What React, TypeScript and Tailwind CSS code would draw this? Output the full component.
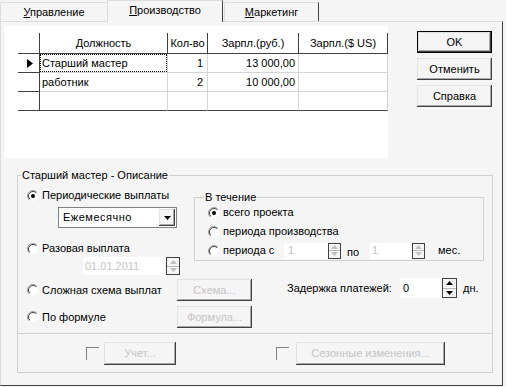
import React from 'react';

const BEVEL = 'shadow-[inset_-1px_-1px_#404040,inset_1px_1px_#e2e2e2,inset_-2px_-2px_#a8a8a8]';

const Radio = ({ checked = false }: { checked?: boolean }) => (
  <svg width="12" height="12" viewBox="0 0 12 12" className="shrink-0">
    <circle cx="6" cy="6" r="5" fill="#ffffff" />
    <path d="M9.9 2.1 A5.5 5.5 0 0 0 2.1 9.9" fill="none" stroke="#a0a0a0" strokeWidth="1" />
    <path d="M9.2 2.8 A4.5 4.5 0 0 0 2.8 9.2" fill="none" stroke="#404040" strokeWidth="1" />
    {checked && <circle cx="6" cy="6" r="2" fill="#000000" />}
  </svg>
);

const RadioRow = ({ label, checked, className = '' }: { label: string; checked?: boolean; className?: string }) => (
  <div className={`flex items-center gap-[3px] h-[13px] ${className}`}>
    <Radio checked={checked} />
    <span className="whitespace-nowrap">{label}</span>
  </div>
);

const Checkbox = ({ className = '' }: { className?: string }) => (
  <div className={`w-[13px] h-[13px] shrink-0 border-t border-l border-[#808080] bg-[#f5f5f5] ${className}`} />
);

const Arrow = ({ up, color }: { up?: boolean; color: string }) => (
  <svg width="7" height="4" viewBox="0 0 7 4">
    <path d={up ? 'M3.5 0 L7 4 L0 4 Z' : 'M0 0 L7 0 L3.5 4 Z'} fill={color} />
  </svg>
);

const Spin = ({ className = '', disabled = false }: { className?: string; disabled?: boolean }) => {
  const c = disabled ? '#c0c0c0' : '#000000';
  return (
    <div className={`flex flex-col shrink-0 border border-[#404040] bg-[#f5f5f5] ${className}`}>
      <div className="flex-1 flex items-center justify-center border-b border-[#b8b8b8]">
        <Arrow up color={c} />
      </div>
      <div className="flex-1 flex items-center justify-center">
        <Arrow color={c} />
      </div>
    </div>
  );
};

const Button = ({
  children,
  className = '',
  disabled = false,
  isDefault = false,
}: {
  children: React.ReactNode;
  className?: string;
  disabled?: boolean;
  isDefault?: boolean;
}) => (
  <div
    className={`flex items-center justify-center shrink-0 bg-[#f5f5f5] ${BEVEL} ${
      isDefault ? 'border border-black' : ''
    } ${disabled ? 'text-[#c4c4c4]' : 'text-black'} ${className}`}
  >
    {children}
  </div>
);

const Tab = ({ first, rest, selected, className = '' }: { first: string; rest: string; selected?: boolean; className?: string }) => (
  <div
    className={`flex items-center justify-center shrink-0 bg-[#f5f5f5] border-t border-l border-[#dcdcdc] rounded-tl-[2px] ${
      selected ? 'h-[22px] -mb-px relative z-10 pb-[2px]' : 'h-[19px]'
    } ${className}`}
  >
    <span>
      <span className="underline underline-offset-[1px]">{first}</span>
      {rest}
    </span>
  </div>
);

const rows = [
  { name: 'Старший мастер', qty: '1', rub: '13 000,00', focus: true, current: true },
  { name: 'работник', qty: '2', rub: '10 000,00' },
  { name: '', qty: '', rub: '' },
];

const Grid = () => (
  <div className="w-[370px]">
    <div className="flex h-[21px] border-b border-[#404040]">
      <div className="w-[22px] border-r border-[#404040]" />
      <div className="w-[128px] border-r border-[#404040] flex items-center justify-center">Должность</div>
      <div className="w-[40px] border-r border-[#404040] flex items-center justify-center">Кол-во</div>
      <div className="w-[91px] border-r border-[#404040] flex items-center justify-center">Зарпл.(руб.)</div>
      <div className="w-[89px] border-r border-[#404040] flex items-center justify-center">Зарпл.($ US)</div>
    </div>
    {rows.map((r, i) => {
      const last = i === rows.length - 1;
      const bb = last ? 'border-b-[#404040]' : 'border-b-[#d4d4d4]';
      return (
        <div key={i} className="flex h-[19px]">
          <div className="w-[22px] border-r border-b border-[#404040] flex items-center justify-center pl-[3px]">
            {r.current && (
              <svg width="6" height="9" viewBox="0 0 6 9">
                <path d="M0 0 L6 4.5 L0 9 Z" fill="#000" />
              </svg>
            )}
          </div>
          <div className={`w-[128px] border-r border-b border-r-[#d4d4d4] ${bb} flex`}>
            <div className={`flex-1 flex items-center pl-[1px] ${r.focus ? 'border border-dotted border-black' : 'border border-transparent'}`}>
              {r.name}
            </div>
          </div>
          <div className={`w-[40px] border-r border-b border-r-[#d4d4d4] ${bb} flex items-center justify-end pr-[4px]`}>{r.qty}</div>
          <div className={`w-[91px] border-r border-b border-r-[#d4d4d4] ${bb} flex items-center justify-end pr-[3px]`}>{r.rub}</div>
          <div className={`w-[89px] border-r border-b border-r-[#d4d4d4] ${bb}`} />
        </div>
      );
    })}
  </div>
);

export default function App() {
  return (
    <div className="w-[506px] h-[387px] bg-[#f5f5f5] font-['Liberation_Sans',Arial,sans-serif] text-[11px] leading-[13px] text-black overflow-hidden select-none">
      {/* tabs */}
      <div className="flex items-end h-[21px]">
        <Tab first="У" rest="правление" className="w-[107px]" />
        <Tab first="П" rest="роизводство" selected className="w-[116px] border-r border-r-[#404040]" />
        <Tab first="М" rest="аркетинг" className="w-[95px] ml-[1px] border-r border-r-[#404040]" />
      </div>

      {/* tab page */}
      <div className="w-[503px] h-[365px] border border-t-[#dcdcdc] border-l-[#dcdcdc] border-r-[#404040] border-b-[#404040]">
        <div className="flex pt-[4px] pl-[4px]">
          <div className="w-[383px] h-[132px] bg-white pt-[7px] pl-[13px]">
            <Grid />
          </div>
          <div className="ml-[29px] pt-[5px] flex flex-col gap-[5px]">
            <Button isDefault className="w-[75px] h-[22px]">OK</Button>
            <Button className="w-[75px] h-[22px]">Отменить</Button>
            <Button className="w-[75px] h-[22px]">Справка</Button>
          </div>
        </div>

        <fieldset className="ml-[16px] mt-[11px] w-[476px] border border-[#d0d0d0]">
          <legend className="ml-[3px] px-[1px]">Старший мастер - Описание</legend>

          <div className="flex">
            <div className="w-[176px] pl-[9px]">
              <RadioRow label="Периодические выплаты" checked className="mt-[7px]" />
              <div className="ml-[31px] mt-[5px] w-[119px] h-[21px] border border-[#808080] bg-white flex items-center p-[1px]">
                <span className="flex-1 pl-[3px] tracking-[0.5px]">Ежемесячно</span>
                <div className={`w-[16px] h-full flex items-center justify-center bg-[#f5f5f5] ${BEVEL}`}>
                  <Arrow color="#000" />
                </div>
              </div>
              <RadioRow label="Разовая выплата" className="mt-[14px]" />
              <div className="flex ml-[56px] mt-[2px] h-[18px]">
                <div className="w-[82px] bg-white pl-[2px] flex items-center text-[#c4c4c4]">01.01.2011</div>
                <Spin disabled className="w-[14px] ml-[1px]" />
              </div>
            </div>

            <fieldset className="mt-[9px] w-[290px] self-start border border-[#d0d0d0]">
              <legend className="ml-[9px] px-[1px]">В течение</legend>
              <div className="pl-[13px] pb-[1px]">
                <RadioRow label="всего проекта" checked className="mt-[2px]" />
                <RadioRow label="периода производства" className="mt-[6px]" />
                <div className="flex items-center mt-[4px] h-[17px]">
                  <div className="w-[76px]">
                    <RadioRow label="периода с" />
                  </div>
                  <div className="w-[44px] h-[16px] bg-white pl-[4px] flex items-center text-[#c4c4c4]">1</div>
                  <Spin disabled className="w-[13px] h-[16px]" />
                  <span className="ml-[6px] w-[23px] mt-[3px]">по</span>
                  <div className="w-[42px] h-[16px] bg-white pl-[2px] flex items-center text-[#c4c4c4]">1</div>
                  <Spin disabled className="w-[13px] h-[16px]" />
                  <span className="ml-[13px]">мес.</span>
                </div>
              </div>
            </fieldset>
          </div>

          <div className="flex">
            <div className="w-[234px] pl-[9px]">
              <div className="flex items-center mt-[4px] h-[22px]">
                <div className="w-[150px]">
                  <RadioRow label="Сложная схема выплат" />
                </div>
                <Button disabled className="w-[75px] h-[22px]">Схема...</Button>
              </div>
              <div className="flex items-center mt-[5px] h-[22px]">
                <div className="w-[150px]">
                  <RadioRow label="По формуле" />
                </div>
                <Button disabled className="w-[75px] h-[22px]">Формула...</Button>
              </div>
            </div>
            <div className="ml-[35px] mt-[3px] h-[20px] flex items-center">
              <span className="w-[113px] whitespace-nowrap">Задержка платежей:</span>
              <div className="w-[41px] h-[20px] bg-white pl-[3px] flex items-center">0</div>
              <Spin className="w-[15px] h-[20px] ml-[1px]" />
              <span className="ml-[6px]">дн.</span>
            </div>
          </div>

          <div className="mt-[5px] border-t border-[#d0d0d0] pt-[8px] pb-[7px]">
            <div className="flex items-center h-[23px]">
              <Checkbox className="ml-[68px]" />
              <Button disabled className="ml-[5px] w-[72px] h-[23px]">Учет...</Button>
              <Checkbox className="ml-[100px]" />
              <Button disabled className="ml-[7px] w-[149px] h-[23px]">Сезонные изменения...</Button>
            </div>
          </div>
        </fieldset>
      </div>
    </div>
  );
}
